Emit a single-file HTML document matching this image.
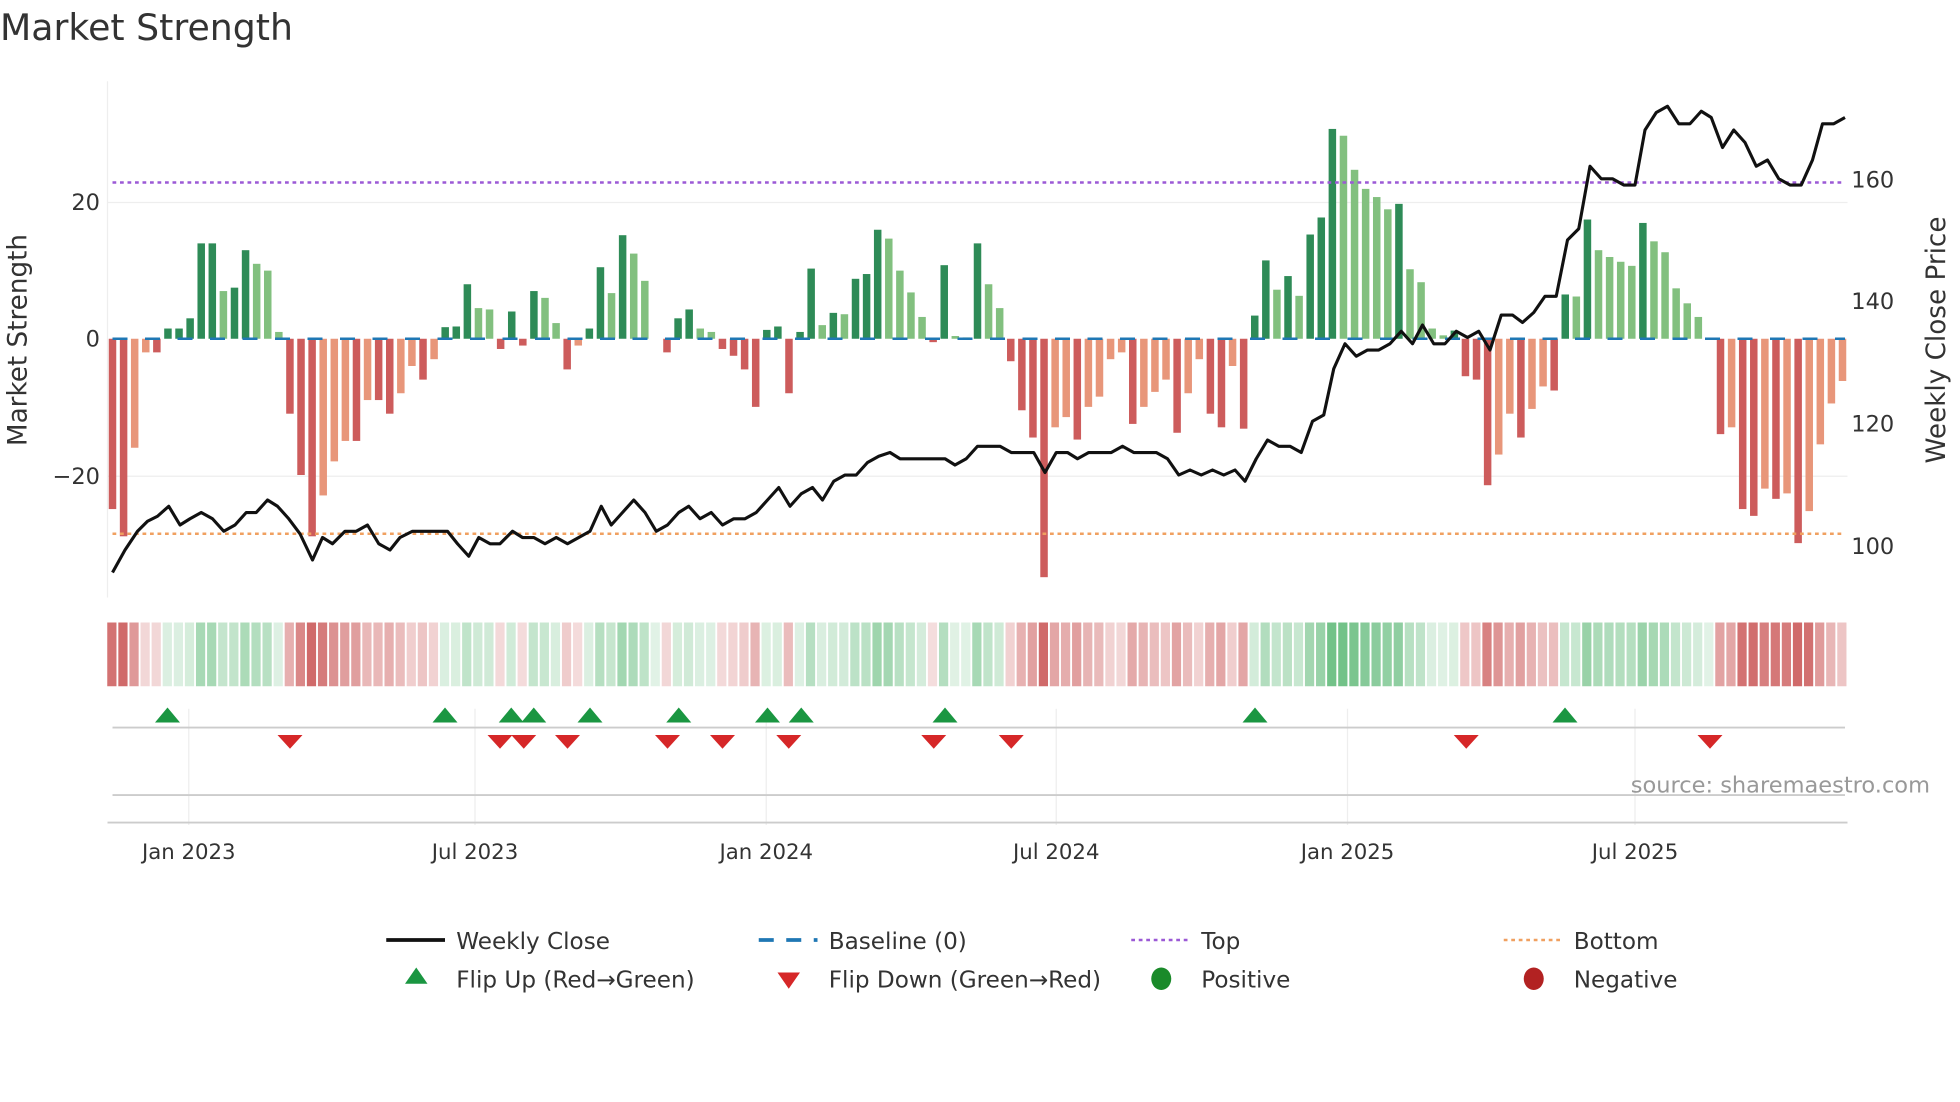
<!DOCTYPE html>
<html><head><meta charset="utf-8"><style>
html,body{margin:0;padding:0;background:#fff;width:1960px;height:1102px;overflow:hidden}
#w{width:1568px;height:882px;transform:scale(1.25);transform-origin:0 0;position:relative}
svg text{font-family:"DejaVu Sans","Liberation Sans",sans-serif;fill:#333}
</style></head><body><div id="w">
<svg id="s" width="1568" height="882" viewBox="0 0 1568 882" xmlns="http://www.w3.org/2000/svg">
<text x="0" y="32" font-size="29" fill="#333">Market Strength</text>
<line x1="86" y1="65" x2="86" y2="478" stroke="#eee"/>
<line x1="86" y1="162" x2="1478" y2="162" stroke="#eee"/>
<line x1="86" y1="381" x2="1478" y2="381" stroke="#eee"/>
<g id="bars"></g>
<line x1="90" y1="271" x2="1476" y2="271" stroke="#1f77b4" stroke-width="2" stroke-dasharray="12,14"/>
<line x1="90" y1="146" x2="1476" y2="146" stroke="#9b59d6" stroke-width="2" stroke-dasharray="3,3"/>
<line x1="90" y1="427" x2="1476" y2="427" stroke="#f0a060" stroke-width="2" stroke-dasharray="3,3"/>
<polyline id="price" fill="none" stroke="#111" stroke-width="2.5" stroke-linejoin="round"/>
<text x="80" y="168" font-size="18" text-anchor="end">20</text>
<text x="80" y="277" font-size="18" text-anchor="end">0</text>
<text x="80" y="387" font-size="18" text-anchor="end">−20</text>
<text x="1481" y="150" font-size="18">160</text>
<text x="1481" y="247" font-size="18">140</text>
<text x="1481" y="345" font-size="18">120</text>
<text x="1481" y="443" font-size="18">100</text>
<text transform="translate(21,272) rotate(-90)" font-size="21" text-anchor="middle">Market Strength</text>
<text transform="translate(1556,272) rotate(-90)" font-size="21" text-anchor="middle">Weekly Close Price</text>
<g id="heat"></g>
<g stroke="#eee"><line x1="151" y1="567" x2="151" y2="660"/><line x1="380" y1="567" x2="380" y2="660"/><line x1="613" y1="567" x2="613" y2="660"/><line x1="845" y1="567" x2="845" y2="660"/><line x1="1078" y1="567" x2="1078" y2="660"/><line x1="1308" y1="567" x2="1308" y2="660"/></g>
<line x1="90" y1="582" x2="1476" y2="582" stroke="#ccc" stroke-width="1.5"/>
<line x1="90" y1="636" x2="1476" y2="636" stroke="#ccc" stroke-width="1.5"/>
<line x1="86" y1="658" x2="1478" y2="658" stroke="#ccc" stroke-width="1.5"/>
<g id="sig"></g>
<text x="1544" y="634" font-size="18" text-anchor="end" style="fill:#999">source: sharemaestro.com</text>
<g font-size="17" text-anchor="middle">
<text x="151" y="687">Jan 2023</text><text x="380" y="687">Jul 2023</text><text x="613" y="687">Jan 2024</text><text x="845" y="687">Jul 2024</text><text x="1078" y="687">Jan 2025</text><text x="1308" y="687">Jul 2025</text></g>
<g stroke-width="3">
<line x1="309" y1="752" x2="356" y2="752" stroke="#111"/>
<line x1="607" y1="752" x2="654" y2="752" stroke="#1f77b4" stroke-dasharray="12,10"/>
<line x1="905" y1="752" x2="950" y2="752" stroke="#9b59d6" stroke-width="2" stroke-dasharray="3,3"/>
<line x1="1203" y1="752" x2="1248" y2="752" stroke="#f0a060" stroke-width="2" stroke-dasharray="3,3"/>
</g>
<polygon points="324,787 342,787 333,774" fill="#1a9641"/>
<polygon points="622,778 640,778 631,791" fill="#d62728"/>
<ellipse cx="929" cy="783" rx="8" ry="9" fill="#1a8a2a"/>
<ellipse cx="1227" cy="783" rx="8" ry="9" fill="#b22222"/>
<g font-size="18.5">
<text x="365" y="759">Weekly Close</text><text x="663" y="759">Baseline (0)</text><text x="961" y="759">Top</text><text x="1259" y="759">Bottom</text>
<text x="365" y="790">Flip Up (Red→Green)</text><text x="663" y="790">Flip Down (Green→Red)</text><text x="961" y="790">Positive</text><text x="1259" y="790">Negative</text></g>
</svg></div>
<script>
(function(){
var v=[-25,-29,-16,-2,-2,1.5,1.5,3,14,14,7,7.5,13,11,10,1,-11,-20,-29,-23,-18,-15,-15,-9,-9,-11,-8,-4,-6,-3,1.7,1.8,8,4.5,4.3,-1.5,4,-1,7,6,2.3,-4.5,-1,1.5,10.5,6.7,15.2,12.5,8.5,0,-2,3,4.3,1.5,1,-1.5,-2.5,-4.5,-10,1.3,1.8,-8,1,10.3,2,3.8,3.6,8.8,9.5,16,14.7,10,6.8,3.2,-0.5,10.8,0.4,0.2,14,8,4.5,-3.3,-10.5,-14.5,-35,-13,-11.5,-14.8,-10,-8.5,-3,-2,-12.5,-10,-7.8,-6,-13.8,-8,-3,-11,-13,-4,-13.2,3.4,11.5,7.2,9.2,6.3,15.3,17.8,30.8,29.8,24.8,22,20.8,19,19.8,10.2,8.3,1.5,0.5,1.2,-5.5,-6,-21.5,-17,-11,-14.5,-10.3,-7,-7.6,6.5,6.2,17.5,13,12,11.3,10.7,17,14.3,12.7,7.4,5.2,3.2,0,-14,-13,-25,-26,-22,-23.5,-22.7,-30,-25.3,-15.5,-9.5,-6.2];
var n=v.length,x0=90,dx=(1474-90)/(n-1),b='',h='';
for(var i=0;i<n;i++){var x=x0+i*dx,y=v[i],p=i?v[i-1]:0,c;
if(y>=0)c=(y>=p)?'#2e8b57':'#82c07f';else c=(y<=p)?'#cd5c5c':'#e8967a';
var ty=y>=0?271-y*5.45:271,ht=Math.abs(y)*5.45;
b+='<rect x="'+(x-3)+'" y="'+ty+'" width="6" height="'+ht+'" fill="'+c+'"/>';
var a=Math.min(0.85,0.18+Math.abs(y)/40);
var hc=y>=0?'rgba(60,170,90,'+(a*0.85)+')':'rgba(200,80,80,'+a+')';
h+='<rect x="'+(x-4.2)+'" y="498" width="'+(dx-1.5)+'" height="51" fill="'+hc+'"/>';}
document.getElementById('bars').innerHTML=b;document.getElementById('heat').innerHTML=h;
var pr=[90,458,100,440,110,425,118,417,126,413,135,405,144,420,152,415,161,410,170,415,179,425,188,420,197,410,205,410,214,400,222,405,231,415,240,427,250,448,258,430,266,435,276,425,285,425,294,420,303,435,312,440,320,430,330,425,340,425,350,425,358,425,366,435,375,445,383,430,392,435,400,435,410,425,418,430,427,430,436,435,445,430,454,435,463,430,472,425,481,405,489,420,498,410,507,400,516,410,525,425,534,420,543,410,551,405,560,415,569,410,578,420,587,415,596,415,605,410,614,400,623,390,632,405,641,395,650,390,658,400,667,385,676,380,685,380,694,370,703,365,712,362,720,367,729,367,738,367,747,367,756,367,764,372,773,367,782,357,791,357,800,357,809,362,818,362,827,362,836,378,845,362,854,362,862,367,871,362,880,362,889,362,898,357,907,362,916,362,925,362,934,367,943,380,952,376,961,380,970,376,979,380,988,376,996,385,1005,367,1014,352,1023,357,1032,357,1041,362,1050,337,1059,332,1067,295,1076,275,1085,285,1094,280,1103,280,1112,275,1121,265,1130,275,1138,260,1147,275,1156,275,1165,265,1174,270,1183,265,1192,280,1201,252,1210,252,1218,258,1227,250,1236,237,1245,237,1254,192,1263,183,1272,133,1281,143,1290,143,1299,148,1308,148,1316,104,1325,90,1334,85,1343,99,1352,99,1361,89,1369,94,1378,118,1387,104,1396,114,1405,133,1414,128,1423,143,1432,148,1441,148,1450,128,1458,99,1467,99,1476,94];
var ps='';for(var j=0;j<pr.length;j+=2)ps+=pr[j]+','+pr[j+1]+' ';
document.getElementById('price').setAttribute('points',ps);
var up=[134,356,409,427,472,543,614,641,756,1004,1252],dn=[232,400,419,454,534,578,631,747,809,1173,1368],s='';
up.forEach(function(x){s+='<polygon points="'+(x-10)+',578 '+(x+10)+',578 '+x+',566" fill="#1a9641"/>'});
dn.forEach(function(x){s+='<polygon points="'+(x-10)+',588 '+(x+10)+',588 '+x+',599" fill="#d62728"/>'});
document.getElementById('sig').innerHTML=s;
})();
</script></body></html>
